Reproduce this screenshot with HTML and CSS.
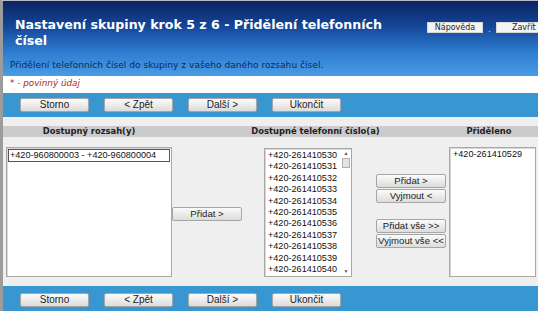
FILE: index.html
```html
<!DOCTYPE html>
<html lang="cs">
<head>
  <meta charset="UTF-8" />
  <title>Nastavení skupiny krok 5 z 6</title>
  <link rel="stylesheet" href="styles.css">
</head>
<body>
  <div class="frame">
    <!-- Header -->
    <header class="page-head">
      <div class="head-top">
        <h1>Nastavení skupiny krok 5 z 6 - Přidělení telefonních čísel</h1>
        <div class="head-actions">
          <button class="small-btn">Nápověda</button>
          <span class="dot">.</span>
          <button class="small-btn">Zavřít</button>
        </div>
      </div>
      <p class="desc">Přidělení telefonních čísel do skupiny z vašeho daného rozsahu čísel.</p>
    </header>

    <div class="required">* - povinný údaj</div>

    <div class="toolbar">
      <button class="btn">Storno</button>
      <button class="btn">&lt; Zpět</button>
      <button class="btn">Další &gt;</button>
      <button class="btn">Ukončit</button>
    </div>

    <main class="content">
      <div class="col-heads">
        <div class="col-head col-range">Dostupný rozsah(y)</div>
        <div class="col-head col-avail">Dostupné telefonní číslo(a)</div>
        <div class="col-head col-assigned">Přiděleno</div>
      </div>

      <div class="lists">
        <div class="listbox list-range">
          <div class="item selected">+420-960800003 - +420-960800004</div>
        </div>

        <div class="mid-actions">
          <button class="btn btn-side">Přidat &gt;</button>
        </div>

        <div class="listbox list-avail">
          <div class="list-items">
            <div class="item">+420-261410530</div>
            <div class="item">+420-261410531</div>
            <div class="item">+420-261410532</div>
            <div class="item">+420-261410533</div>
            <div class="item">+420-261410534</div>
            <div class="item">+420-261410535</div>
            <div class="item">+420-261410536</div>
            <div class="item">+420-261410537</div>
            <div class="item">+420-261410538</div>
            <div class="item">+420-261410539</div>
            <div class="item">+420-261410540</div>
          </div>
          <div class="scrollbar">
            <span class="arrow">&#9650;</span>
            <span class="thumb"></span>
            <span class="track"></span>
            <span class="arrow">&#9660;</span>
          </div>
        </div>

        <div class="side-actions">
          <button class="btn btn-side">Přidat &gt;</button>
          <button class="btn btn-side">Vyjmout &lt;</button>
          <button class="btn btn-side spaced">Přidat vše &gt;&gt;</button>
          <button class="btn btn-side">Vyjmout vše &lt;&lt;</button>
        </div>

        <div class="listbox list-assigned">
          <div class="item">+420-261410529</div>
        </div>
      </div>
    </main>

    <div class="toolbar toolbar-bottom">
      <button class="btn">Storno</button>
      <button class="btn">&lt; Zpět</button>
      <button class="btn">Další &gt;</button>
      <button class="btn">Ukončit</button>
    </div>
  </div>
</body>
</html>
```

FILE: styles.css
```css
body {
  margin: 0;
  padding: 0;
  background-color: #efefef;
  font-family: 'DejaVu Sans', Verdana, sans-serif;
  color: #222;
}

.frame {
  border-left: 3px solid #9c9c9c;
  border-top: 1px solid #b9bccb;
  height: 310px;
  overflow: hidden;
  background-color: #efefef;
}

/* Header */
.page-head {
  background: linear-gradient(to bottom, #0a2360 0%, #15489a 35%, #2f7fd2 70%, #4a9ce4 100%);
  padding: 16px 0 0 12px;
  height: 59px;
}

.head-top {
  display: flex;
  align-items: flex-start;
}

.page-head h1 {
  margin: 0;
  width: 400px;
  flex-shrink: 0;
  font-size: 12.6px;
  line-height: 16px;
  font-weight: bold;
  color: white;
}

.head-actions {
  display: flex;
  align-items: flex-end;
  gap: 5px;
  margin: 5px 0 0 12px;
}

.small-btn {
  flex-shrink: 0;
  background-color: #f4f4f4;
  border: 1px solid #d8d8d8;
  padding: 0;
  height: 11px;
  width: 56px;
  font-family: 'DejaVu Sans', Verdana, sans-serif;
  font-size: 8px;
  line-height: 9px;
  color: #222;
}

.dot {
  color: #c8d8f0;
  font-size: 9px;
  line-height: 8px;
}

.desc {
  margin: 11px 0 0 -5px;
  font-size: 9.1px;
  color: #0c2a5c;
}

.required {
  background-color: white;
  color: #a82828;
  font-style: italic;
  font-size: 8.8px;
  padding: 2px 0 0 7px;
  height: 15px;
}

/* Toolbars */
.toolbar {
  background-color: #3896d0;
  display: flex;
  gap: 15px;
  padding: 5px 0 0 17px;
  height: 19px;
}

.toolbar-bottom {
  padding-top: 7px;
  height: 18px;
}

.btn {
  flex-shrink: 0;
  width: 69px;
  height: 14px;
  padding: 0;
  background: linear-gradient(to bottom, #fbfbfb 0%, #ececec 50%, #dcdcdc 100%);
  border: 1px solid #a6a6a6;
  border-radius: 2px;
  font-family: 'Liberation Sans', Arial, sans-serif;
  font-size: 10px;
  line-height: 12px;
  color: #222;
  white-space: nowrap;
}

/* Content */
.content {
  height: 160px;
  padding-top: 9px;
}

.col-heads {
  display: flex;
  background-color: #cbcbcb;
  height: 11px;
  font-size: 8.4px;
  font-weight: bold;
  line-height: 11px;
  color: #222;
}

.col-head {
  text-align: center;
}

.col-range {
  width: 172px;
}

.col-avail {
  width: 278px;
  padding-left: 3px;
  box-sizing: border-box;
}

.col-assigned {
  width: 72px;
}

.lists {
  display: flex;
  align-items: flex-start;
  margin-top: 10px;
}

.listbox {
  background-color: white;
  border: 1px solid #a8a8a8;
  box-shadow: inset 1px 1px 0 #d8d8d8;
  height: 128px;
  font-family: 'Liberation Sans', Arial, sans-serif;
  font-size: 9.1px;
  color: #111;
}

.item {
  line-height: 11.4px;
  padding-left: 1px;
  white-space: nowrap;
}

.item.selected {
  border: 1px solid #555;
  margin: 1px;
  line-height: 11px;
}

.list-range {
  width: 164px;
  margin-left: 3px;
}

.mid-actions {
  width: 92px;
  padding-top: 55px;
}

.list-avail {
  width: 86px;
  display: flex;
  height: 127px;
  margin-top: 1px;
  overflow: hidden;
}

.list-items {
  flex: 1;
  padding-top: 1px;
  padding-left: 2px;
}

.scrollbar {
  width: 10px;
  display: flex;
  flex-direction: column;
  align-items: center;
  font-size: 5px;
  color: #555;
}

.arrow {
  height: 9px;
  line-height: 9px;
}

.thumb {
  width: 8px;
  height: 10px;
  background-color: #e4e4e4;
  border: 1px solid #b0b0b0;
  box-sizing: border-box;
}

.track {
  flex: 1;
}

.side-actions {
  width: 94px;
  display: flex;
  flex-direction: column;
  align-items: flex-end;
  padding-top: 27px;
  gap: 1px;
}

.btn-side {
  width: 70px;
  height: 14px;
  font-size: 9.6px;
}

.side-actions .spaced {
  margin-top: 15px;
}

.list-assigned {
  width: 85px;
  margin-left: 3px;
}

.list-assigned .item {
  padding-top: 1px;
  padding-left: 3px;
}
```
